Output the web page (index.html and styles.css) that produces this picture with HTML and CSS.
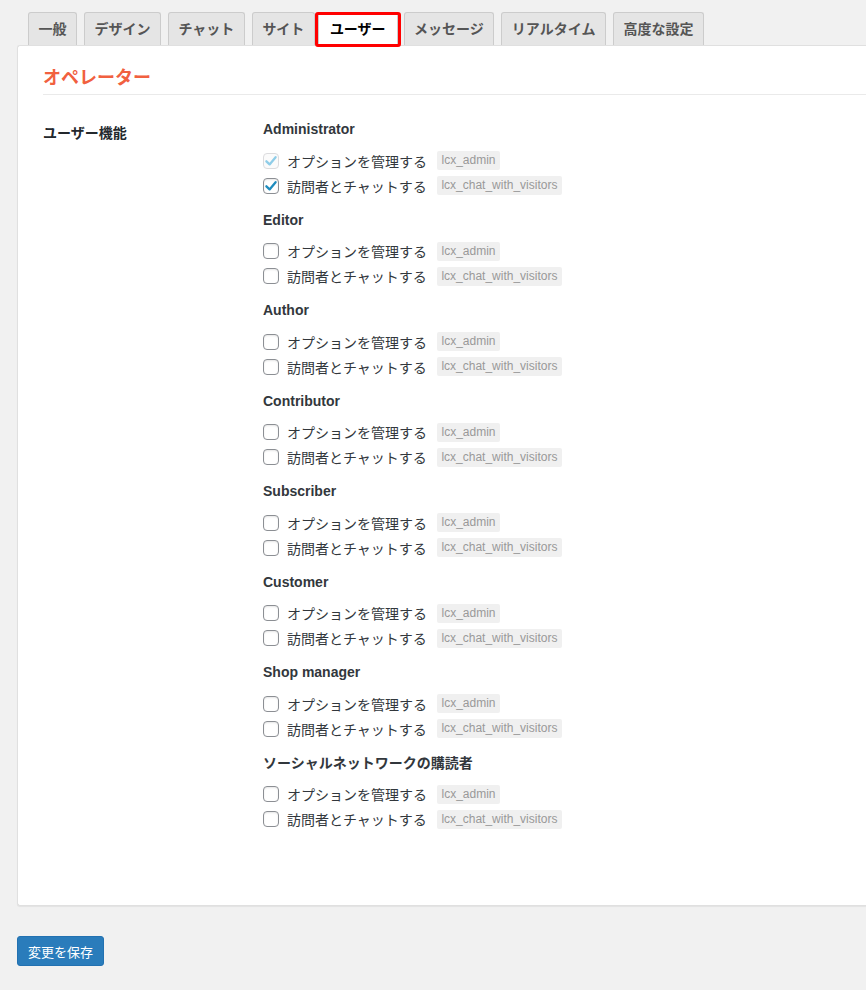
FILE: index.html
```html
<!DOCTYPE html>
<html lang="ja">
<head>
<meta charset="utf-8">
<title>ユーザー設定</title>
<link rel="stylesheet" href="styles.css">
</head>
<body>
<div class="wrap">
  <nav class="tabs">
    <span class="tab">一般</span>
    <span class="tab">デザイン</span>
    <span class="tab">チャット</span>
    <span class="tab">サイト</span>
    <span class="tab active">ユーザー</span>
    <span class="tab after-active">メッセージ</span>
    <span class="tab">リアルタイム</span>
    <span class="tab">高度な設定</span>
  </nav>
  <section class="panel">
    <h2 class="heading">オペレーター</h2>
    <div class="form-row">
      <div class="th">ユーザー機能</div>
      <div class="td" id="roles"></div>
    </div>
  </section>
  <div class="submit"><button class="btn">変更を保存</button></div>
</div>
<script src="app.js"></script>
</body>
</html>
```

FILE: app.js
```js
var roles = ["Administrator","Editor","Author","Contributor","Subscriber","Customer","Shop manager","ソーシャルネットワークの購読者"];
var check = '<svg class="ck" viewBox="0 0 16 16" width="16" height="16"><polyline points="3.4,8.3 6.6,11.4 12.6,4.2" fill="none" stroke-width="2.3" stroke-linecap="round" stroke-linejoin="round"/></svg>';
var html = "";
roles.forEach(function (r, i) {
  var a = i === 0 ? " disabled-checked" : "";
  var b = i === 0 ? " checked" : "";
  html += '<div class="group"><div class="role">' + r + '</div>' +
    '<label class="row"><span class="box' + a + '">' + (i === 0 ? check : "") + '</span><span class="lbl">オプションを管理する</span><code class="cap">lcx_admin</code></label>' +
    '<label class="row"><span class="box' + b + '">' + (i === 0 ? check : "") + '</span><span class="lbl">訪問者とチャットする</span><code class="cap">lcx_chat_with_visitors</code></label></div>';
});
document.getElementById("roles").innerHTML = html;
```

FILE: styles.css
```css
html, body {
  margin: 0;
  padding: 0;
  overflow: hidden;
  background: #f1f1f1;
}
body {
  font-family: "Liberation Sans", "Noto Sans CJK JP", sans-serif;
  color: #23282d;
  font-size: 14px;
}
.wrap {
  padding: 12px 0 0 17px;
}
.tabs {
  display: flex;
  padding-left: 11px;
  height: 33px;
  position: relative;
  z-index: 2;
}
.tab {
  display: block;
  height: 32px;
  line-height: 32px;
  padding: 0 9.5px;
  border: 1px solid #ccc;
  border-bottom: none;
  background: #e5e5e5;
  color: #555;
  font-weight: 700;
  font-size: 14px;
  margin-left: 7px;
  white-space: nowrap;
  border-radius: 3px 3px 0 0;
}
.tab:first-child { margin-left: 0; }
.tab.active {
  background: #fff;
  color: #000;
  margin-left: 3px;
  padding: 0 11px;
  height: 33px;
  position: relative;
}
.tab.active::after {
  content: "";
  position: absolute;
  left: -4px;
  right: -4px;
  top: -1px;
  bottom: -1px;
  border: 3px solid #f00;
  border-radius: 3px;
}
.tab.after-active { margin-left: 6px; }
.panel {
  background: #fff;
  border: 1px solid #e0e0e0;
  border-right: none;
  border-radius: 3px 0 0 3px;
  box-shadow: 0 1px 1px rgba(0,0,0,.06);
  padding: 20px 0 0 25px;
  box-sizing: border-box;
  height: 861px;
}
.heading {
  margin: 0;
  font-size: 18px;
  line-height: 24px;
  font-weight: 700;
  color: #f1603f;
  padding-bottom: 4px;
  border-bottom: 1px solid #eaeaea;
}
.form-row {
  display: flex;
  padding-top: 24px;
}
.th {
  width: 220px;
  flex: none;
  font-weight: 700;
  line-height: 20px;
  padding-top: 4px;
  color: #23282d;
}
.group { margin-bottom: 11.5px; }
.role {
  font-weight: 700;
  line-height: 20px;
  margin-bottom: 9px;
  color: #32373c;
}
.row {
  display: flex;
  align-items: center;
  height: 25px;
  color: #32373c;
}
.box {
  width: 14px;
  height: 14px;
  border: 1px solid #8c8f94;
  border-radius: 4px;
  background: #fff;
  flex: none;
  position: relative;
  box-shadow: inset 0 1px 2px rgba(0,0,0,.1);
}
.box .ck {
  position: absolute;
  left: -1px;
  top: -1px;
}
.box.checked .ck polyline { stroke: #1e8cbe; }
.box.disabled-checked {
  border-color: #dcdcde;
  background: #fbfbfb;
  box-shadow: none;
}
.box.disabled-checked .ck polyline { stroke: #8fcde8; }
.lbl {
  margin-left: 8px;
  font-size: 14px;
}
.cap {
  margin-left: 10px;
  font-family: "Liberation Sans", sans-serif;
  font-size: 12px;
  line-height: 19px;
  padding: 0 4.5px;
  background: #f0f0f0;
  color: #999;
  border-radius: 2px;
}
.submit {
  padding-top: 30px;
}
.btn {
  font-family: "Liberation Sans", "Noto Sans CJK JP", sans-serif;
  font-size: 13px;
  height: 30px;
  width: 87px;
  padding: 0;
  border: 1px solid #2271b1;
  background: #2a7cbb;
  color: #fff;
  border-radius: 3px;
}
```
